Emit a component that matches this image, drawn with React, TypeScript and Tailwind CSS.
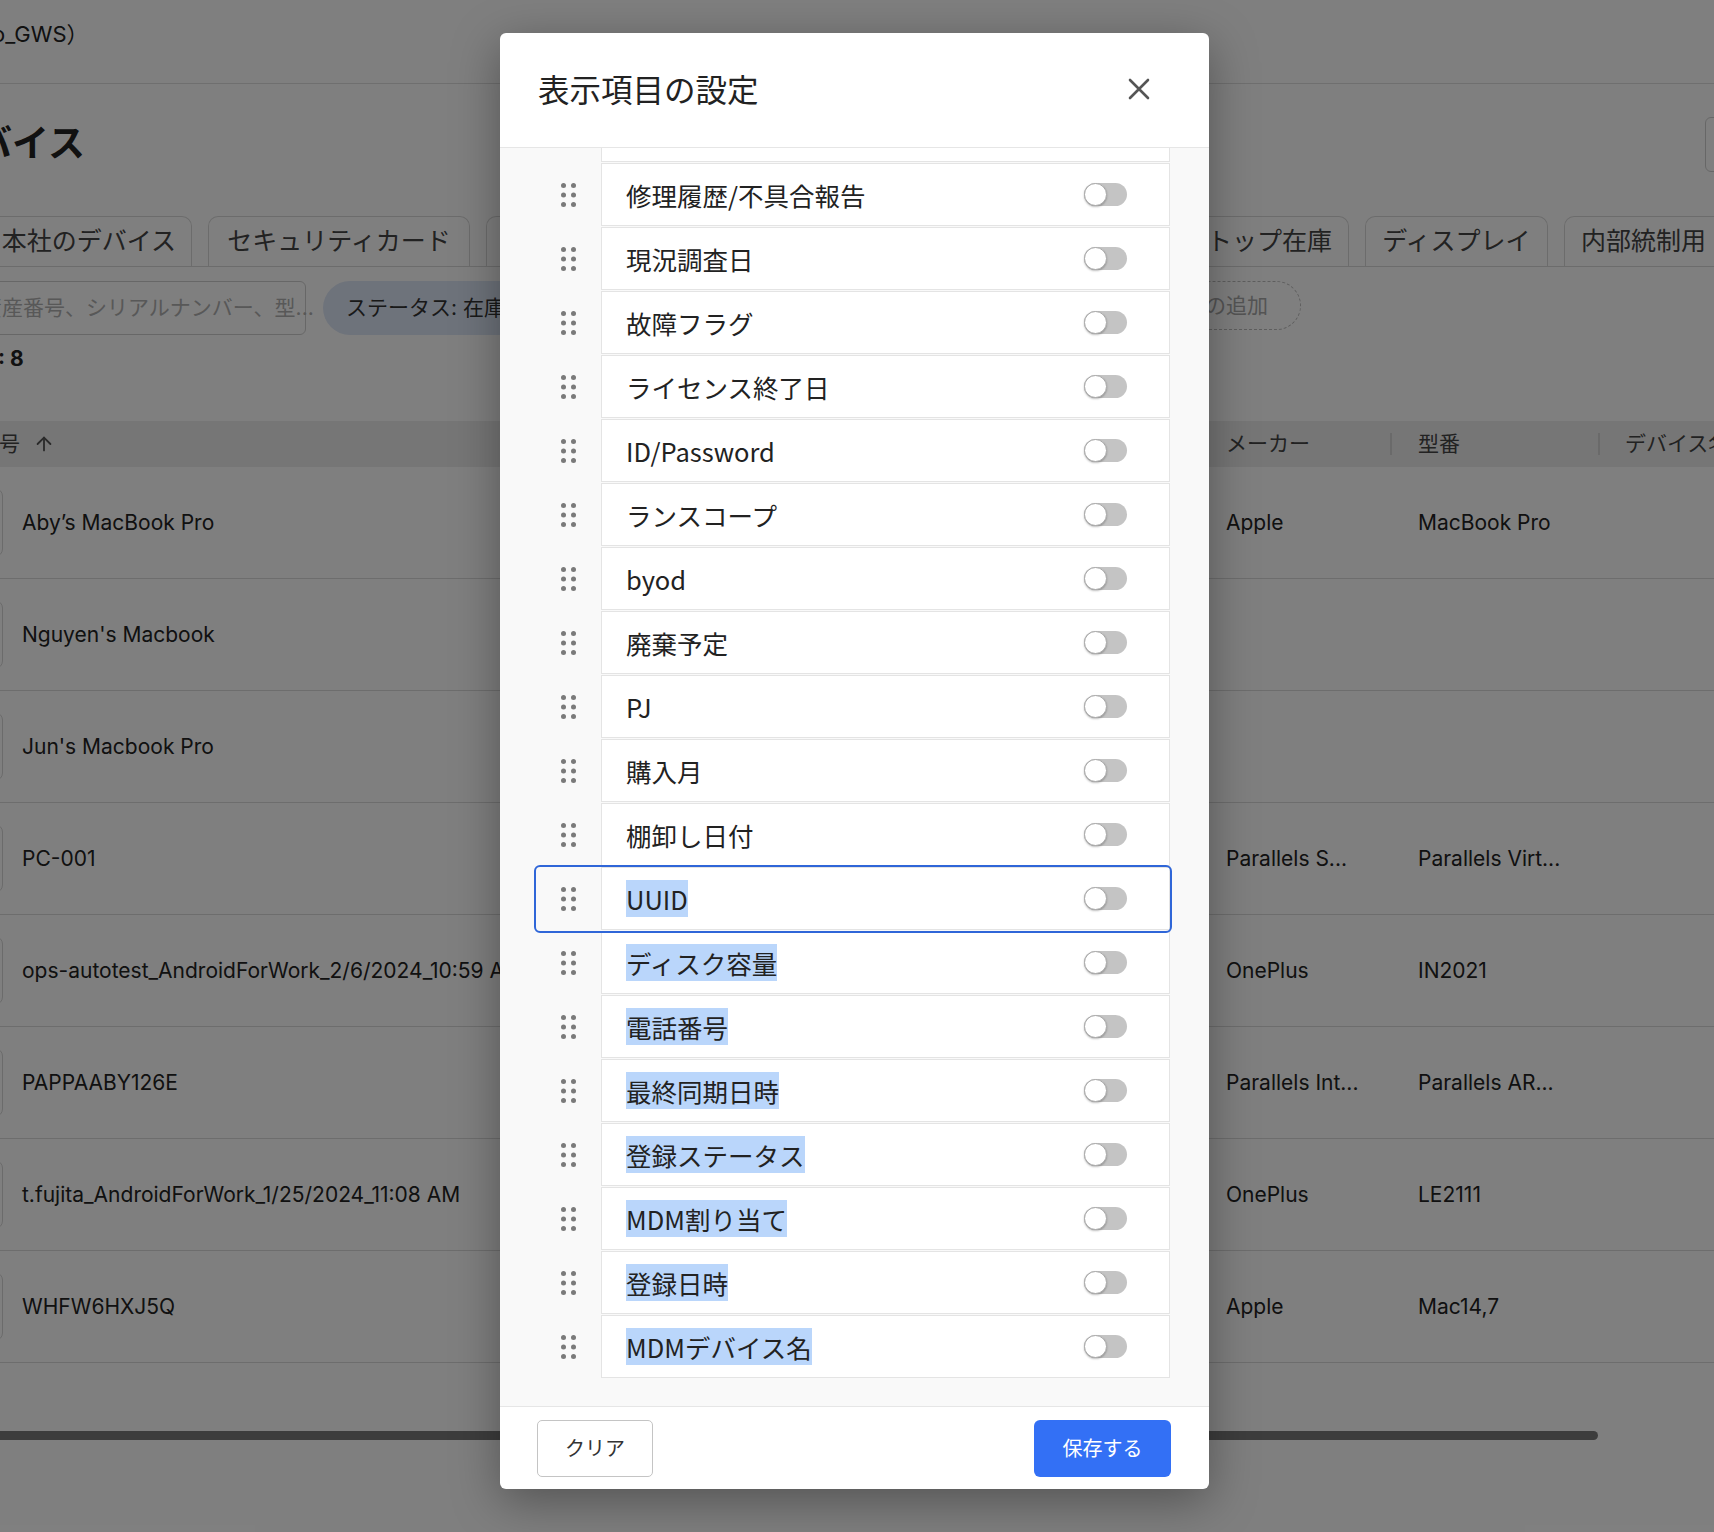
import { ArrowUp } from 'lucide-react';

const sans = 'font-["Inter","Noto_Sans_CJK_JP",sans-serif]';
const jp = 'font-["Noto_Sans_CJK_JP","Noto_Sans",sans-serif]';

const tabs = [
  { label: '本社のデバイス', w: 'w-[206px]' },
  { label: 'セキュリティカード', w: 'w-[262px]' },
  { label: '支社のデバイス', w: 'w-[214px]' },
  { label: 'スマートフォン', w: 'w-[184px]' },
  { label: 'タブレット', w: 'w-[183px]' },
  { label: 'ラップトップ在庫', w: 'w-[234px]' },
  { label: 'ディスプレイ', w: 'w-[183px]' },
  { label: '内部統制用', w: 'px-[16px]' },
];

const devices = [
  { name: "Aby’s MacBook Pro", maker: 'Apple', model: 'MacBook Pro' },
  { name: "Nguyen's Macbook", maker: '', model: '' },
  { name: "Jun's Macbook Pro", maker: '', model: '' },
  { name: 'PC-001', maker: 'Parallels S...', model: 'Parallels Virt...' },
  { name: 'ops-autotest_AndroidForWork_2/6/2024_10:59 AM', maker: 'OnePlus', model: 'IN2021' },
  { name: 'PAPPAABY126E', maker: 'Parallels Int...', model: 'Parallels AR...' },
  { name: 't.fujita_AndroidForWork_1/25/2024_11:08 AM', maker: 'OnePlus', model: 'LE2111' },
  { name: 'WHFW6HXJ5Q', maker: 'Apple', model: 'Mac14,7' },
];

const columns = [
  { label: 'シリアル番号', selected: false },
  { label: '修理履歴/不具合報告', selected: false },
  { label: '現況調査日', selected: false },
  { label: '故障フラグ', selected: false },
  { label: 'ライセンス終了日', selected: false },
  { label: 'ID/Password', selected: false },
  { label: 'ランスコープ', selected: false },
  { label: 'byod', selected: false },
  { label: '廃棄予定', selected: false },
  { label: 'PJ', selected: false },
  { label: '購入月', selected: false },
  { label: '棚卸し日付', selected: false },
  { label: 'UUID', selected: true, focused: true },
  { label: 'ディスク容量', selected: true },
  { label: '電話番号', selected: true },
  { label: '最終同期日時', selected: true },
  { label: '登録ステータス', selected: true },
  { label: 'MDM割り当て', selected: true },
  { label: '登録日時', selected: true },
  { label: 'MDMデバイス名', selected: true },
];

function Grip() {
  return (
    <svg width="15" height="24" viewBox="0 0 15 24" fill="#7a7a7a">
      <circle cx="2.5" cy="2.5" r="2.5" />
      <circle cx="12.5" cy="2.5" r="2.5" />
      <circle cx="2.5" cy="12" r="2.5" />
      <circle cx="12.5" cy="12" r="2.5" />
      <circle cx="2.5" cy="21.5" r="2.5" />
      <circle cx="12.5" cy="21.5" r="2.5" />
    </svg>
  );
}

function Toggle() {
  return (
    <div className="relative ml-auto mr-[42px] h-[23px] w-[43px] shrink-0 rounded-full bg-[#c4c4c4]">
      <span className="absolute left-0 top-0 h-[23px] w-[23px] rounded-full border border-[#a9a9a9] bg-white shadow-[0_1px_2px_rgba(0,0,0,0.25)]" />
    </div>
  );
}

function ColumnRow({ label, selected, focused }: { label: string; selected: boolean; focused?: boolean }) {
  return (
    <div className={`flex h-[64px] rounded-[4px] ${focused ? 'outline-2 outline-[#2f66d8]' : ''}`}>
      <div className="flex w-[65px] shrink-0 items-center justify-center">
        <Grip />
      </div>
      <div className="mb-px flex flex-1 items-center border border-[#e4e4e4] bg-white pl-[24px]">
        <span className={`text-[25.5px] leading-[37px] text-[#222] ${selected ? 'bg-[#bad6fb]' : ''}`}>{label}</span>
        <Toggle />
      </div>
    </div>
  );
}

function ColumnSettingsModal() {
  return (
    <div className={`absolute left-[500px] top-[33px] flex h-[1456px] w-[709px] flex-col overflow-hidden rounded-[6px] bg-white shadow-[0_12px_48px_rgba(0,0,0,0.35)] ${jp}`}>
      <div className="flex h-[115px] shrink-0 items-center justify-between border-b border-[#e6e6e6] pb-[3px] pl-[38px] pr-[59px]">
        <h2 className="text-[31.5px] font-normal leading-none text-[#222]">表示項目の設定</h2>
        <svg width="22" height="22" viewBox="0 0 22 22" stroke="#555" strokeWidth="2.6" strokeLinecap="round">
          <path d="M2 2 20 20M20 2 2 20" />
        </svg>
      </div>

      <div className="flex-1 overflow-hidden bg-[#f9f9f9] pl-[36px] pr-[39px]">
        <div className="-mt-[49px]">
          {columns.map((c) => (
            <ColumnRow key={c.label} label={c.label} selected={c.selected} focused={c.focused} />
          ))}
        </div>
      </div>

      <div className="flex h-[83px] shrink-0 items-center justify-between border-t border-[#e6e6e6] pl-[37px] pr-[38px]">
        <button className="h-[57px] w-[116px] rounded-[5px] border border-[#c4c4c4] bg-white text-[20px] text-[#333]">クリア</button>
        <button className="h-[57px] w-[137px] rounded-[6px] bg-[#3370f5] text-[20px] text-white">保存する</button>
      </div>
    </div>
  );
}

function DevicePage() {
  return (
    <div className={`text-[#333] ${sans}`}>
      {/* top bar */}
      <div className="h-[84px] border-b border-[#dedede] pt-[20px]">
        <span className="-ml-[8px] text-[22px] leading-[28px] text-[#222]">o_GWS）</span>
      </div>

      {/* heading */}
      <div className="flex h-[133px] items-start pt-[35px]">
        <h1 className="-ml-[62px] text-[37px] font-bold leading-[50px] text-[#222]">デバイス</h1>
        <div className="ml-auto -mr-[101px] -mt-[2px] h-[55px] w-[110px] rounded-[6px] border border-[#cfcfcf]" />
      </div>

      {/* tabs */}
      <div className="flex h-[50px] items-end gap-4 border-b border-[#d9d9d9] pl-0">
        <div className="-ml-[14px] flex gap-4">
          {tabs.map((t) => (
            <div
              key={t.label}
              className={`flex h-[50px] shrink-0 items-center justify-center rounded-t-[10px] border border-b-0 border-[#d9d9d9] text-[25px] text-[#444] ${t.w}`}
            >
              {t.label}
            </div>
          ))}
        </div>
      </div>

      {/* filters */}
      <div className="mt-[14px] flex h-[54px] w-[1301px] items-start">
        <div className="-ml-[34px] flex h-[54px] w-[340px] items-center rounded-[6px] border border-[#cfcfcf] pl-[14px] text-[21px] text-[#b0b0b0]">
          <span className="whitespace-nowrap">資産番号、シリアルナンバー、型...</span>
        </div>
        <div className="ml-[17px] flex h-[54px] items-center rounded-full bg-[#dde6f6] px-[23px] text-[21px] text-[#333]">
          ステータス: 在庫あり
        </div>
        <div className="ml-auto flex h-[49px] items-center rounded-full border border-dashed border-[#bdbdbd] px-[32px] text-[21px] text-[#a8a8a8]">
          + フィルターの追加
        </div>
      </div>

      {/* count */}
      <div className="mt-[12px] h-[24px] text-[21px] font-bold leading-[24px] text-[#222]">
        <span className="-ml-[44px]">件数: 8</span>
      </div>

      {/* table header */}
      <div className="mt-[50px] flex h-[46px] items-center bg-[#ececec] text-[21px] text-[#444]">
        <div className="flex w-[1226px] shrink-0 items-center">
          <span className="-ml-[64px]">資産番号</span>
          <ArrowUp size={22} strokeWidth={2} className="ml-[13px] text-[#555]" />
        </div>
        <div className="flex w-[192px] shrink-0 items-center">
          <span>メーカー</span>
          <span className="ml-auto mr-[26px] h-[22px] w-[2px] bg-[#d4d4d4]" />
        </div>
        <div className="flex w-[207px] shrink-0 items-center">
          <span>型番</span>
          <span className="ml-auto mr-[25px] h-[22px] w-[2px] bg-[#d4d4d4]" />
        </div>
        <div className="shrink-0 whitespace-nowrap">デバイス名</div>
      </div>

      {/* rows */}
      {devices.map((d) => (
        <div key={d.name} className="flex h-[112px] items-center border-b border-[#dadada] text-[21px] text-[#222]">
          <div className="flex w-[1226px] shrink-0 items-center">
            <div className="-ml-[65px] h-[69px] w-[68px] shrink-0 rounded-[8px] border border-[#d6d6d6]" />
            <span className="ml-[19px] whitespace-nowrap">{d.name}</span>
          </div>
          <div className="w-[192px] shrink-0 whitespace-nowrap">{d.maker}</div>
          <div className="w-[207px] shrink-0 whitespace-nowrap">{d.model}</div>
        </div>
      ))}

      {/* horizontal scrollbar */}
      <div className="mt-[68px] h-[9px] w-[1598px] rounded-r-full bg-[#7a7a7a]" />
    </div>
  );
}

export default function App() {
  return (
    <div className="relative h-[1532px] w-[1714px] overflow-hidden bg-white">
      <DevicePage />
      <div className="absolute inset-0 bg-black/50" />
      <ColumnSettingsModal />
    </div>
  );
}
